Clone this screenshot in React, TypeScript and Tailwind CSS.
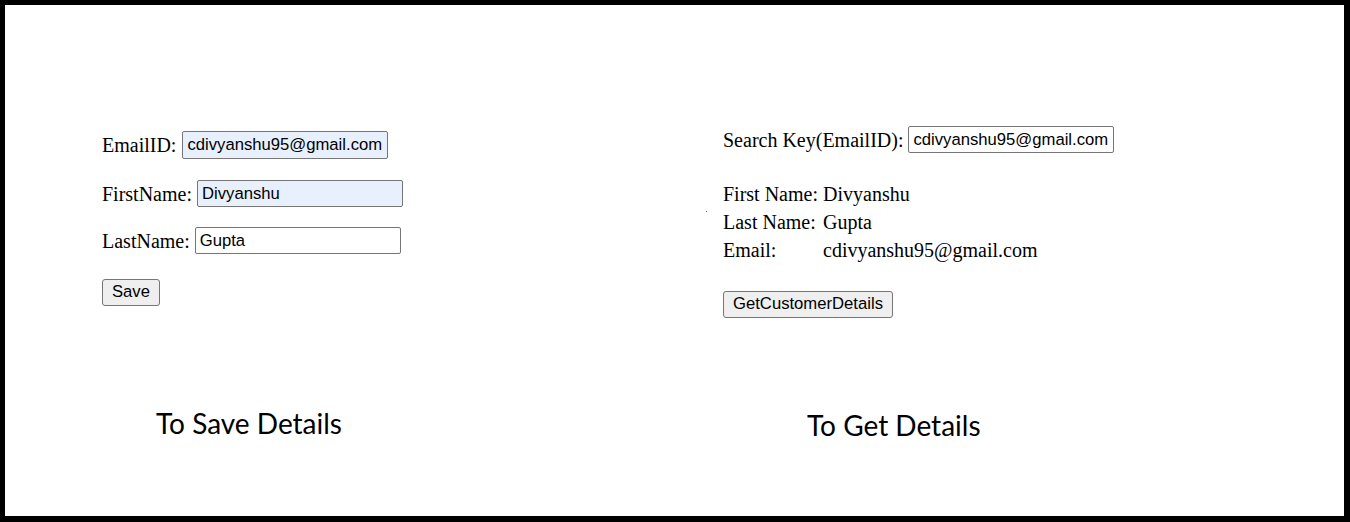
import React from "react";

const serif = { fontFamily: '"Liberation Serif", "Times New Roman", serif' };
const sans = { fontFamily: '"Liberation Sans", Arial, sans-serif' };
const title = { fontFamily: 'Lato, "Open Sans", sans-serif' };

function Field({ label, value, filled }: { label: string; value: string; filled?: boolean }) {
  return (
    <div className="flex items-center gap-[6px] h-[28px]">
      <span className="text-[20px] text-black leading-none" style={serif}>
        {label}
      </span>
      <input
        readOnly
        value={value}
        className={`w-[206px] h-[28px] border border-[#767676] rounded-[2px] pl-[4px] text-[16.67px] text-black outline-none ${
          filled ? "bg-[#e8f0fe]" : "bg-white"
        }`}
        style={sans}
      />
    </div>
  );
}

function Btn({ children }: { children: React.ReactNode }) {
  return (
    <button
      className="h-[27px] px-[9px] border border-[#767676] rounded-[3px] bg-[#efefef] text-[16.67px] text-black leading-none"
      style={sans}
    >
      {children}
    </button>
  );
}

export default function App() {
  return (
    <div className="w-[1350px] h-[522px] bg-white border-t-[5px] border-l-[5px] border-r-[6px] border-b-[6px] border-black overflow-hidden">
      <div className="grid grid-cols-[718px_1fr] h-full">
        {/* save side */}
        <div className="flex flex-col pl-[97px] pt-[126px]">
          <Field label="EmailID:" value="cdivyanshu95@gmail.com" filled />
          <div className="mt-[21px] flex items-center gap-[5px] h-[27px]">
            <span className="text-[20px] leading-none" style={serif}>FirstName:</span>
            <input
              readOnly
              value="Divyanshu"
              className="w-[206px] h-[27px] border border-[#767676] rounded-[2px] pl-[4px] text-[16.67px] bg-[#e8f0fe] outline-none"
              style={sans}
            />
          </div>
          <div className="mt-[20px] flex items-center gap-[5px] h-[27px]">
            <span className="text-[20px] leading-none" style={serif}>LastName:</span>
            <input
              readOnly
              value="Gupta"
              className="w-[206px] h-[27px] border border-[#767676] rounded-[2px] pl-[4px] text-[16.67px] bg-white outline-none"
              style={sans}
            />
          </div>
          <div className="mt-[25px]">
            <Btn>Save</Btn>
          </div>
          <div className="mt-[100px] ml-[54px] text-[28px] text-black leading-[34px]" style={title}>
            To Save Details
          </div>
        </div>

        {/* get side */}
        <div className="relative flex flex-col pt-[121px]">
          <div className="flex items-center gap-[5px] h-[27px]">
            <span className="text-[20px] leading-none" style={serif}>Search Key(EmailID):</span>
            <input
              readOnly
              value="cdivyanshu95@gmail.com"
              className="w-[206px] h-[27px] border border-[#767676] rounded-[2px] pl-[4px] text-[16.67px] bg-white outline-none"
              style={sans}
            />
          </div>
          <div className="mt-[27px] flex flex-col text-[20px] text-black" style={serif}>
            <div className="flex h-[28px] items-center">
              <span className="w-[100px]">First Name:</span>
              <span>Divyanshu</span>
            </div>
            <div className="flex h-[28px] items-center">
              <span className="w-[100px]">Last Name:</span>
              <span>Gupta</span>
            </div>
            <div className="flex h-[28px] items-center">
              <span className="w-[100px]">Email:</span>
              <span>cdivyanshu95@gmail.com</span>
            </div>
          </div>
          <div className="mt-[27px]">
            <Btn>GetCustomerDetails</Btn>
          </div>
          <div className="mt-[90px] ml-[84px] text-[28px] text-black leading-[34px]" style={title}>
            To Get Details
          </div>
          <span className="absolute left-[-17px] top-[206px] w-[1px] h-[1px] bg-[#666]" />
        </div>
      </div>
    </div>
  );
}
